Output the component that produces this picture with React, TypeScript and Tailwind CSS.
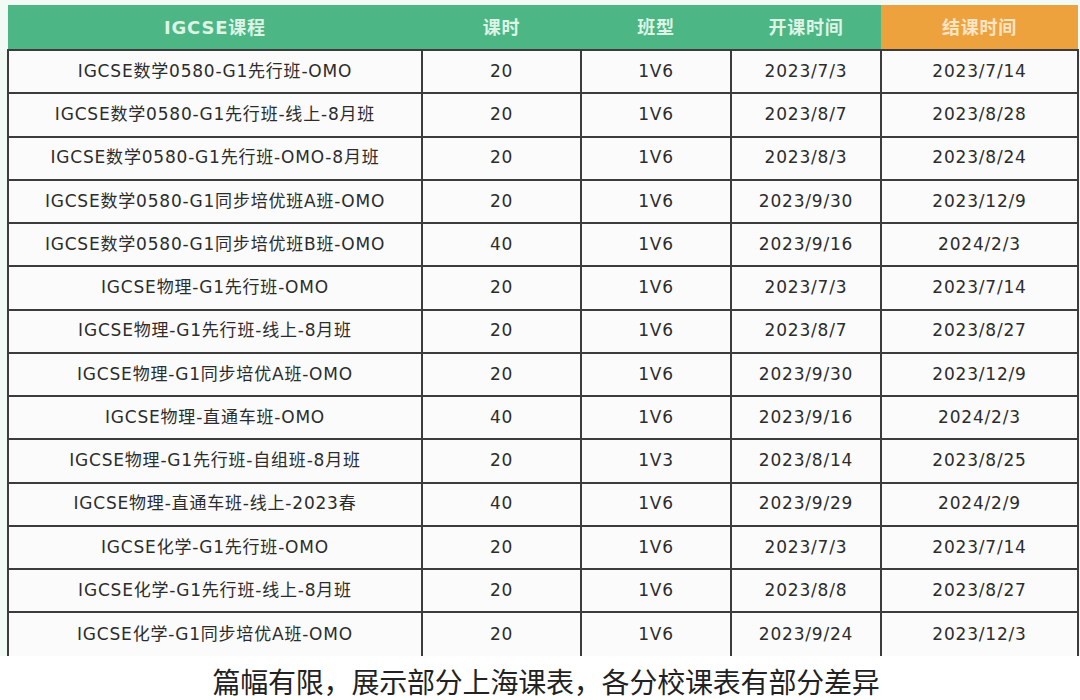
import React from "react";

type Course = {
  name: string;
  hours: number;
  type: string;
  start: string;
  end: string;
};

const courses: Course[] = [
  { name: "IGCSE数学0580-G1先行班-OMO", hours: 20, type: "1V6", start: "2023/7/3", end: "2023/7/14" },
  { name: "IGCSE数学0580-G1先行班-线上-8月班", hours: 20, type: "1V6", start: "2023/8/7", end: "2023/8/28" },
  { name: "IGCSE数学0580-G1先行班-OMO-8月班", hours: 20, type: "1V6", start: "2023/8/3", end: "2023/8/24" },
  { name: "IGCSE数学0580-G1同步培优班A班-OMO", hours: 20, type: "1V6", start: "2023/9/30", end: "2023/12/9" },
  { name: "IGCSE数学0580-G1同步培优班B班-OMO", hours: 40, type: "1V6", start: "2023/9/16", end: "2024/2/3" },
  { name: "IGCSE物理-G1先行班-OMO", hours: 20, type: "1V6", start: "2023/7/3", end: "2023/7/14" },
  { name: "IGCSE物理-G1先行班-线上-8月班", hours: 20, type: "1V6", start: "2023/8/7", end: "2023/8/27" },
  { name: "IGCSE物理-G1同步培优A班-OMO", hours: 20, type: "1V6", start: "2023/9/30", end: "2023/12/9" },
  { name: "IGCSE物理-直通车班-OMO", hours: 40, type: "1V6", start: "2023/9/16", end: "2024/2/3" },
  { name: "IGCSE物理-G1先行班-自组班-8月班", hours: 20, type: "1V3", start: "2023/8/14", end: "2023/8/25" },
  { name: "IGCSE物理-直通车班-线上-2023春", hours: 40, type: "1V6", start: "2023/9/29", end: "2024/2/9" },
  { name: "IGCSE化学-G1先行班-OMO", hours: 20, type: "1V6", start: "2023/7/3", end: "2023/7/14" },
  { name: "IGCSE化学-G1先行班-线上-8月班", hours: 20, type: "1V6", start: "2023/8/8", end: "2023/8/27" },
  { name: "IGCSE化学-G1同步培优A班-OMO", hours: 20, type: "1V6", start: "2023/9/24", end: "2023/12/3" },
];

const cell = "border-x-2 border-t-2 border-[#3c3c3c] text-center h-[43.25px] p-0";

const App: React.FC = () => {
  return (
    <div className="w-[1080px] h-[700px] bg-white overflow-hidden flex flex-col">
      {/* table area */}
      <div className="bg-[#f2faf6] pt-[5px] pl-[7px] pr-[3px]">
        <table
          className="table-fixed border-collapse w-[1070px] text-[17px] tracking-[0.8px] text-[#2c2c2c]"
          style={{ fontFamily: '"DejaVu Sans", "Noto Sans CJK SC", sans-serif' }}
        >
          <colgroup>
            <col className="w-[414px]" />
            <col className="w-[159px]" />
            <col className="w-[150px]" />
            <col className="w-[150px]" />
            <col className="w-[197px]" />
          </colgroup>
          <thead>
            <tr className="h-[45px] text-[18px] text-[#dcf3e6]">
              <th className="bg-[#4cb784] font-semibold">IGCSE课程</th>
              <th className="bg-[#4cb784] font-semibold">课时</th>
              <th className="bg-[#4cb784] font-semibold">班型</th>
              <th className="bg-[#4cb784] font-semibold">开课时间</th>
              <th className="bg-[#eea23e] font-semibold text-[#fbe5c4]">结课时间</th>
            </tr>
          </thead>
          <tbody className="bg-[#fbfbfb]">
            {courses.map((c, i) => (
              <tr key={i}>
                <td className={cell}>{c.name}</td>
                <td className={cell}>{c.hours}</td>
                <td className={cell}>{c.type}</td>
                <td className={cell}>{c.start}</td>
                <td className={cell}>{c.end}</td>
              </tr>
            ))}
          </tbody>
        </table>
      </div>

      {/* caption */}
      <div
        className="flex-1 flex items-center justify-center text-[28px] tracking-[-0.2px] text-[#222] pt-[4px] pl-[12px]"
        style={{ fontFamily: '"Noto Sans CJK SC", sans-serif' }}
      >
        篇幅有限，展示部分上海课表，各分校课表有部分差异
      </div>
    </div>
  );
};

export default App;
